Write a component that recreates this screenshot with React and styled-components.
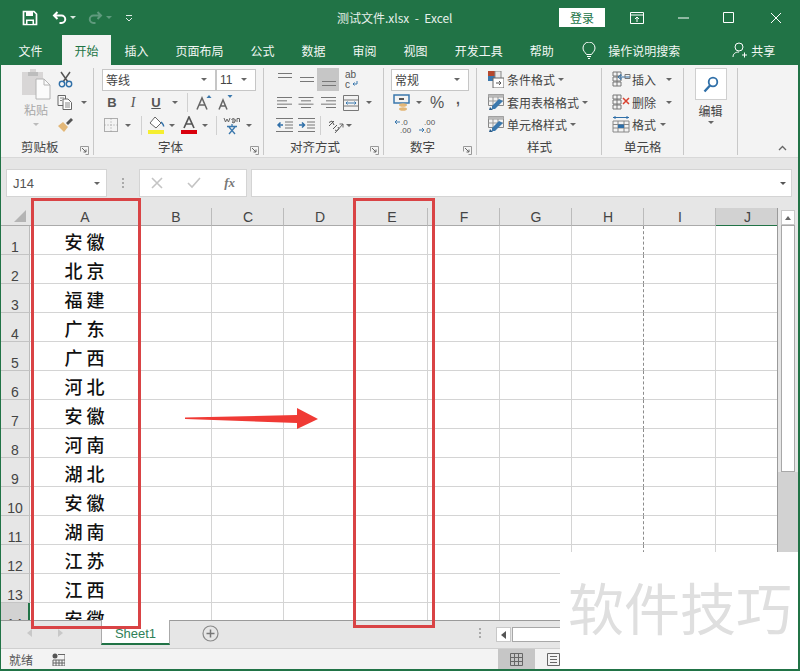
import React from "react"
import styled, { createGlobalStyle } from "styled-components"

const Global = createGlobalStyle`
html, body { margin: 0; padding: 0; background: #fff; overflow: hidden; }
* { box-sizing: border-box; }
`
const CJK = `"Noto Sans CJK SC", "Liberation Sans", sans-serif`

const Win = styled.div`
position: relative;
width: 800px;
height: 671px;
display: flex;
flex-direction: column;
overflow: hidden;
font-family: ${CJK};
font-size: 12px;
color: #444;
background: #e6e6e6;
border-left: 1px solid #217346;
border-right: 2px solid #217346;
border-bottom: 2px solid #217346;
`
const TitleBar = styled.div`
height: 35px;
flex: none;
background: #217346;
color: #fff;
display: flex;
align-items: center;
padding-left: 21px;
`
const QuickGroup = styled.div`
display: flex;
align-items: center;
width: 315px;
flex: none;
`
const Spacer = styled.span`
width: ${p => p.$w}px;
flex: none;
`
const Title = styled.div`
width: 122px;
flex: none;
white-space: pre;
font-size: 12px;
color: #e6f0ea;
`
const Login = styled.div`
margin-left: 100px;
width: 46px;
height: 19px;
background: #fff;
color: #217346;
font-size: 12px;
display: flex;
align-items: center;
justify-content: center;
`
const WinBtns = styled.div`
display: flex;
align-items: center;
margin-left: 25px;
gap: 33px;
`
const TabBar = styled.div`
height: 30px;
flex: none;
background: #217346;
color: #fff;
display: flex;
align-items: stretch;
padding-left: 4px;
`
const Tab = styled.div`
padding: 0 ${p => p.$pad ?? 13.5}px;
margin-left: ${p => p.$ml || 0}px;
display: flex;
align-items: center;
white-space: nowrap;
font-size: 12px;
background: ${p => (p.$active ? "#f3f3f3" : "transparent")};
color: ${p => (p.$active ? "#217346" : "#f2f7f4")};
`
const Ribbon = styled.div`
height: 93px;
flex: none;
background: #f3f3f3;
display: flex;
padding-top: 3px;
border-bottom: 1px solid #d8d8d8;
`
const Group = styled.div`
width: ${p => p.$w}px;
flex: none;
height: 87px;
display: flex;
flex-direction: column;
border-right: 1.5px solid #c8c8c8;
`
const GroupBody = styled.div`
height: 68px;
flex: none;
display: flex;
`
const Footer = styled.div`
flex: 1;
display: grid;
grid-template-columns: ${p => p.$l}px auto 1fr;
align-items: center;
padding: 1px 4px 0 0;
font-size: 12.5px;
color: #444;
`
const Launcher = styled.svg`
justify-self: end;
margin-top: 8px;
`
const Rows = styled.div`
display: flex;
flex-direction: column;
padding-left: ${p => p.$pl || 0}px;
`
const ToolRow = styled.div`
height: ${p => p.$h || 22}px;
display: flex;
align-items: center;
`
const Tool = styled.div`
width: ${p => p.$w || 22}px;
height: 100%;
flex: none;
display: flex;
align-items: ${p => p.$v || "center"};
justify-content: center;
padding: ${p => (p.$v ? "4px 0" : "0")};
background: ${p => (p.$on ? "#c6c6c6" : "transparent")};
`
const Letter = styled.span`
font-family: ${p => (p.$serif ? `"Liberation Serif", serif` : `"Liberation Sans", sans-serif`)};
font-size: ${p => p.$size || 13}px;
font-weight: ${p => (p.$bold ? 700 : 400)};
font-style: ${p => (p.$italic ? "italic" : "normal")};
text-decoration: ${p => (p.$under ? "underline" : "none")};
color: #555;
`
const Comma = styled(Letter)`
padding-bottom: 7px;
`
const Caret = styled.span`
flex: none;
width: 0;
height: 0;
margin: 0 ${p => p.$mx || 0}px;
border-left: 3px solid transparent;
border-right: 3px solid transparent;
border-top: 3px solid ${p => p.$color || "#666"};
`
const UpCaret = styled.span`
width: 0;
height: 0;
border-left: 3px solid transparent;
border-right: 3px solid transparent;
border-bottom: 4px solid #666;
`
const PasteCaret = styled(Caret)`
margin-top: 5px;
`
const PasteLabel = styled.span`
margin-top: 2px;
`
const Sep = styled.span`
width: 1px;
height: 19px;
flex: none;
margin: 0 ${p => p.$mx || 5}px;
background: #d0d0d0;
`
const Combo = styled.div`
width: ${p => p.$w}px;
height: 22px;
flex: none;
background: #fff;
border: 1px solid #c6c6c6;
display: flex;
align-items: center;
justify-content: space-between;
padding: 0 8px 0 3px;
color: #444;
font-family: ${p => (p.$num ? `"Liberation Sans", sans-serif` : CJK)};
font-size: 12px;
`
const PasteCol = styled.div`
width: 54px;
flex: none;
padding-left: 16px;
display: flex;
flex-direction: column;
align-items: center;
color: #a8a8a8;
line-height: 16px;
`
const ListRow = styled.div`
height: 23px;
display: flex;
align-items: center;
gap: ${p => p.$gap ?? 3}px;
white-space: nowrap;
color: #444;
font-size: 12px;
`
const EditBtn = styled.div`
width: 32px;
height: 32px;
background: #fff;
border: 1px solid #cfcfcf;
display: flex;
align-items: center;
justify-content: center;
`
const EditCol = styled.div`
width: 100%;
display: flex;
flex-direction: column;
align-items: center;
gap: 2px;
color: #444;
`
const Collapse = styled.div`
flex: 1;
display: flex;
align-items: flex-end;
justify-content: flex-end;
padding: 0 11px 6px 0;
`
const FormulaBar = styled.div`
height: 50px;
flex: none;
background: #e6e6e6;
padding: 11px 6px 11px 5px;
display: flex;
align-items: stretch;
`
const NameBox = styled.div`
width: 101px;
background: #fff;
border: 1px solid #d4d4d4;
display: flex;
align-items: center;
justify-content: space-between;
padding: 0 6px;
font-family: "Liberation Sans", sans-serif;
font-size: 13px;
color: #555;
`
const Dots = styled.div`
width: 32px;
flex: none;
display: flex;
flex-direction: column;
align-items: center;
justify-content: center;
gap: 2px;
span { width: 2px; height: 2px; background: #aaa; }
`
const StripDots = styled(Dots)`
height: 24px;
margin-left: 245px;
`
const FxBox = styled.div`
width: 108px;
background: #fff;
border: 1px solid #d4d4d4;
display: flex;
align-items: center;
justify-content: space-between;
padding: 0 11px 0 11px;
margin-right: 4px;
`
const FxText = styled.span`
font-family: "Liberation Serif", serif;
font-style: italic;
font-weight: 700;
font-size: 13px;
color: #777;
`
const FormulaInput = styled.div`
flex: 1;
background: #fff;
border: 1px solid #d4d4d4;
display: flex;
align-items: center;
justify-content: flex-end;
padding-right: 5px;
`
const SheetArea = styled.div`
height: 412px;
flex: none;
display: flex;
`
const Grid = styled.div`
width: 777px;
flex: none;
display: grid;
grid-template-columns: 29px 110px repeat(8, 72px) 62px;
grid-auto-rows: 29px;
grid-template-rows: 18px;
overflow: hidden;
background: #fff;
border-right: 1.5px solid #9a9a9a;
`
const Corner = styled.div`
background: #e6e6e6;
border-bottom: 1.5px solid #aaa;
display: flex;
align-items: flex-end;
justify-content: flex-end;
padding: 0 4px 3px 0;
`
const ColHead = styled.div`
background: ${p => (p.$sel ? "#d2d2d2" : "#e6e6e6")};
border-right: ${p => (p.$sel ? "none" : "1.5px solid #bbb")};
border-bottom: 1.5px solid ${p => (p.$sel ? "#217346" : "#aaa")};
display: flex;
align-items: center;
justify-content: center;
padding: 1px 0 0 1px;
font-family: "Liberation Sans", sans-serif;
font-size: 14px;
line-height: 14px;
color: #444;
`
const RowHead = styled.div`
background: ${p => (p.$sel ? "#d2d2d2" : "#e6e6e6")};
border-right: ${p => (p.$sel ? "2px solid #217346" : "1.5px solid #bbb")};
border-bottom: 1.5px solid #c4c4c4;
display: flex;
align-items: flex-end;
justify-content: center;
padding-bottom: 1px;
font-family: "Liberation Sans", sans-serif;
font-size: 14px;
line-height: 12px;
color: #444;
`
const Cell = styled.div`
border-right: ${p => (p.$pageBreak ? "1.5px dashed #8c8c8c" : "1.5px solid #d4d4d4")};
border-bottom: 1.5px solid #d4d4d4;
display: flex;
align-items: center;
justify-content: center;
padding-top: 2px;
font-size: 18px;
font-weight: 500;
color: #111;
white-space: pre;
`
const VScroll = styled.div`
flex: 1;
background: #e6e6e6;
padding: 2px 3px 0 3px;
display: flex;
flex-direction: column;
`
const UpBtn = styled.div`
height: 15px;
flex: none;
background: #fff;
border: 1px solid #c8c8c8;
display: flex;
align-items: center;
justify-content: center;
`
const Thumb = styled.div`
height: 247px;
flex: none;
background: #fff;
border: 1px solid #a8a8a8;
`
const Track = styled.div`
flex: 1;
margin: 0 -3px;
background: #d2d2d2;
`
const TabStrip = styled.div`
height: 28px;
flex: none;
background: #e6e6e6;
border-top: 1.5px solid #9a9a9a;
display: flex;
align-items: flex-start;
`
const Nav = styled.div`
width: 100px;
flex: none;
height: 24px;
display: flex;
align-items: center;
padding-left: 26px;
gap: 24px;
`
const SheetTab = styled.div`
width: 69px;
height: 25px;
flex: none;
background: #fff;
border-left: 1px solid #aaa;
border-right: 1px solid #aaa;
border-bottom: 2px solid #217346;
margin-top: -1px;
display: flex;
align-items: flex-end;
justify-content: center;
padding-bottom: 2px;
font-family: "Liberation Sans", sans-serif;
font-size: 13px;
color: #2f8058;
`
const AddSheet = styled.div`
margin: 4px 0 0 32px;
flex: none;
width: 17px;
`
const HScroll = styled.div`
margin: 6px 0 0 0;
display: flex;
align-items: center;
`
const HBtn = styled.div`
width: 15px;
height: 15px;
background: #fff;
border: 1px solid #c8c8c8;
display: flex;
align-items: center;
justify-content: center;
`
const HThumb = styled.div`
width: 60px;
height: 15px;
margin-left: 1px;
background: #fff;
border: 1px solid #a8a8a8;
`
const StatusBar = styled.div`
flex: 1;
background: #f3f3f3;
border-top: 1px solid #cfcfcf;
display: flex;
align-items: stretch;
padding-left: 8px;
font-size: 12px;
color: #555;
`
const StatusText = styled.div`
display: flex;
align-items: center;
width: 43px;
flex: none;
`
const StatusIcon = styled.div`
display: flex;
align-items: center;
width: 446px;
flex: none;
`
const ViewBtn = styled.div`
width: 37px;
flex: none;
display: flex;
align-items: center;
justify-content: center;
background: ${p => (p.$on ? "#c6c6c6" : "transparent")};
`
const Marker = styled.div`
position: absolute;
left: ${p => p.$l - 1}px;
top: 198px;
width: ${p => p.$w}px;
height: ${p => p.$h}px;
border: 3px solid #d94345;
pointer-events: none;
`
const Arrow = styled.svg`
position: absolute;
left: 183px;
top: 406px;
`
const Watermark = styled.div`
position: absolute;
left: 559px;
top: 552px;
width: 241px;
height: 119px;
background: #fff;
padding: 20px 0 0 8px;
font-size: 56px;
font-weight: 400;
line-height: 68px;
white-space: nowrap;
color: #dfdfdf;
`

const Svg = ({ w = 16, h = 16, children, ...rest }) => (
  <svg width={w} height={h} viewBox={`0 0 ${w} ${h}`} fill="none" {...rest}>{children}</svg>
)
const SaveIcon = () => (
  <Svg>
    <path d="M1.500 1.500h10.500l2.500 2.500v10.500h-13z" stroke="#fff" strokeWidth="1.700" />
    <path d="M4 1.500h7v4.500h-7zM4 9.500h8v5h-8z" fill="#fff" />
    <path d="M5.500 11h5v3h-5z" fill="#217346" />
  </Svg>
)
const UndoIcon = ({ color = "#fff" }) => (
  <Svg w={15} h={15}>
    <path d="M5.500 2L2 5.500 5.500 9M2.500 5.500h7a3.500 3.500 0 0 1 0 7.500H7.500" stroke={color} strokeWidth="2" />
  </Svg>
)
const RedoIcon = () => (
  <Svg w={15} h={15}>
    <path d="M9.500 2L13 5.500 9.500 9M12.500 5.500h-7a3.500 3.500 0 0 0 0 7.500h2" stroke="#5f9a7d" strokeWidth="2" />
  </Svg>
)
const PasteIcon = () => (
  <Svg w={30} h={32}>
    <path d="M1 4h8V1h6v3h7v23H1z" fill="#d8d6d6" />
    <path d="M7 4h10v4H7z" fill="#bdbdbd" />
    <path d="M15 11h8l6 6v14H15z" fill="#fbfbfb" stroke="#b4b4b4" />
    <path d="M23 11v6h6" stroke="#b4b4b4" />
  </Svg>
)
const ScissorsIcon = () => (
  <Svg w={15} h={17}>
    <path d="M3 1l7 10M12 1L5 11" stroke="#555" strokeWidth="1.500" />
    <circle cx="4" cy="13" r="2.700" stroke="#2f6fa8" strokeWidth="1.400" />
    <circle cx="11" cy="13" r="2.700" stroke="#2f6fa8" strokeWidth="1.400" />
  </Svg>
)
const CopyIcon = () => (
  <Svg w={16} h={16}>
    <path d="M1 1.500h7.500v10H1z" stroke="#666" fill="#f8f8f8" />
    <path d="M6 5h5l3.500 3.500v7H6z" stroke="#666" fill="#fff" />
    <path d="M8 9h5M8 11h5M8 13h5M3 4h4M3 6.500h2" stroke="#888" />
  </Svg>
)
const BrushIcon = () => (
  <Svg w={16} h={16}>
    <path d="M1 9l5-4 5 5-4 5z" fill="#e3b777" />
    <path d="M9 6l5-5 2 2-5 5z" fill="#555" />
  </Svg>
)
const BorderIcon = () => (
  <Svg w={14} h={14}>
    <path d="M.5.500h13v13H.5z" stroke="#666" strokeDasharray="1 1" />
    <path d="M7 .5v13M.5 7h13" stroke="#999" strokeDasharray="1 2" />
  </Svg>
)
const FillIcon = () => (
  <Svg w={17} h={19}>
    <path d="M7 1l6 6-5 5-6-5z" fill="#fff" stroke="#666" />
    <path d="M13 6c2 2 3 3 2.500 4.500" stroke="#2f6fa8" strokeWidth="1.500" />
    <path d="M0 14h16v4H0z" fill="#f5ee30" />
  </Svg>
)
const FontColorIcon = () => (
  <Svg w={16} h={19}>
    <path d="M3 12L8 1l5 11M5 8h6" stroke="#555" strokeWidth="1.700" />
    <path d="M0 14h16v4H0z" fill="#d9000d" />
  </Svg>
)
const GrowA = ({ up }) => (
  <Svg w={16} h={18}>
    <path d={up ? "M1 15.500L6 4l5 11.500M3 11h6" : "M2 15.500L6 6l4 9.500M3.500 12h5"} stroke="#666" strokeWidth="1.500" />
    <path d={up ? "M10.500 4l2.500-3 2.500 3z" : "M10.500 1l2.500 3 2.500-3z"} fill="#3b78ad" />
  </Svg>
)
const PinyinIcon = () => (
  <Svg w={18} h={20}>
    <path d="M1 3l1.500 4 1.500-3 1.500 3 1.500-4M9 5h3M8.500 5a2 2 0 1 1 .5 2h3M14 7V3.500h2.500V7" stroke="#666" />
    <path d="M9 9v2M4 11.500h10M6 12l6 7M12 12l-6 7" stroke="#3b78ad" strokeWidth="1.300" />
  </Svg>
)
const LinesIcon = ({ widths = [16, 16, 16], w = 18, h = 13, color = "#777", align = "left" }) => (
  <Svg w={w} h={h}>
    {widths.map((l, i) => {
      const x = align === "center" ? (w - l) / 2 : align === "right" ? w - l : 1
      const y = 1.500 + (i * (h - 3)) / Math.max(widths.length - 1, 1)
      return <path key={i} d={`M${x} ${y}h${l}`} stroke={color} />
    })}
  </Svg>
)
const WrapIcon = () => (
  <Svg w={15} h={20}>
    <text x="1" y="8" fontFamily="Liberation Sans" fontSize="10" fill="#555">ab</text>
    <text x="1" y="18" fontFamily="Liberation Sans" fontSize="10" fill="#555">c</text>
    <path d="M13 11v3h-4M10.500 12.500L9 14l1.500 1.500" stroke="#3b78ad" />
  </Svg>
)
const MergeIcon = () => (
  <Svg w={16} h={16}>
    <path d="M.5.500h15v15H.5zM.5 5h15M.5 11h15" stroke="#777" />
    <path d="M3 8h10M4.500 6.500L3 8l1.500 1.500M11.500 6.500L13 8l-1.500 1.500" stroke="#3b78ad" />
  </Svg>
)
const IndentIcon = ({ right }) => (
  <Svg w={17} h={14}>
    <path d="M0 .500h17M0 13.500h17M9 4h8M9 7h8M9 10h8" stroke="#777" />
    <path d={right ? "M1 7h5M4 4.500L6.500 7 4 9.500" : "M7 7H2M4.500 4.500L2 7l2.500 2.500"} stroke="#2f6fa8" strokeWidth="1.500" />
  </Svg>
)
const OrientIcon = () => (
  <Svg w={17} h={17}>
    <path d="M2 9l5-5M2 5.500l3-1.500 2 4M6 12l4-4M8 13a2 2 0 0 0 3-3" stroke="#555" />
    <path d="M8 16l8-9M12.500 7H16v3.500" stroke="#666" />
  </Svg>
)
const AccountingIcon = () => (
  <Svg w={18} h={18}>
    <path d="M1 1h15v8H1z" stroke="#3b78ad" strokeWidth="1.500" />
    <path d="M6 5h5" stroke="#555" strokeWidth="2" />
    <ellipse cx="10" cy="11" rx="4" ry="1.800" fill="#e3b777" />
    <ellipse cx="10" cy="15" rx="4" ry="1.800" fill="#e3b777" />
  </Svg>
)
const DecimalIcon = ({ more }) => (
  <Svg w={17} h={15}>
    <text x={more ? 5 : 6} y="6.500" fontFamily="Liberation Sans" fontSize="8" fill="#555">{more ? ".00" : ".0"}</text>
    <text x="5" y="14.500" fontFamily="Liberation Sans" fontSize="8" fill="#555">{more ? ".0" : ".00"}</text>
    <path d={more ? "M0 12h5M3 10l2 2-2 2" : "M5 4H0M2 2L0 4l2 2"} stroke="#3b78ad" />
  </Svg>
)
const CondIcon = () => (
  <Svg w={16} h={17}>
    <path d="M0 0h7v5H0z" fill="#b5482e" />
    <path d="M0 5h7v5H0z" fill="#3b78ad" />
    <path d="M7 0h6v10H7z" fill="#e8e8e8" stroke="#888" />
    <path d="M5 7h11v10H5z" fill="#fff" stroke="#666" />
    <path d="M8 12h5M11 10l2 2-2 2" stroke="#555" />
  </Svg>
)
const TableIcon = () => (
  <Svg w={16} h={17}>
    <path d="M.5.500h15v11H.5z" fill="#f2f2f2" stroke="#888" />
    <path d="M.5 3h15M5 .5v11M10 .5v11M.5 7h15" stroke="#999" />
    <path d="M.5.500h15v2.500H.5z" fill="#b9b9b9" />
    <path d="M15 7L7 15H4v-3l7-7z" fill="#3b78ad" />
    <path d="M2 13l3 3H1z" fill="#2b5c88" />
  </Svg>
)
const CellsIcon = ({ kind }) => (
  <Svg w={19} h={16}>
    <path d="M1 1h8v4H1zM1 6h8v4H1zM1 11h8v4H1zM5 1v14" stroke="#777" />
    {kind === "add" && <path d="M10 6h8M6 6l3-2.500v5z" stroke="#2f6fa8" />}
    {kind === "del" && <path d="M11 4l6 6M17 4l-6 6" stroke="#d9402e" strokeWidth="1.500" />}
    {kind === "add" && <path d="M13 3.500h5v4h-5z" stroke="#777" />}
  </Svg>
)
const FormatIcon = () => (
  <Svg w={19} h={17}>
    <path d="M1 5h16v11H1zM1 8.500h16M1 12h16M6 5v11M12 5v11" stroke="#888" />
    <path d="M6 8.500h6V12H6z" fill="#2f6fa8" />
    <path d="M1 1.500h16M3 0v3M15 0v3" stroke="#2f6fa8" />
  </Svg>
)
const SearchIcon = () => (
  <Svg w={16} h={17}>
    <circle cx="10" cy="6" r="4.300" stroke="#2f6fa8" strokeWidth="1.800" />
    <path d="M7 9.500l-5.500 6" stroke="#2f6fa8" strokeWidth="2.400" />
  </Svg>
)
const LaunchMark = () => (
  <Launcher width="9" height="9" viewBox="0 0 9 9" fill="none">
    <path d="M.5 5.500v-5h8v8h-3" stroke="#999" />
    <path d="M2 2l4 4M6 3.500V6H3.500" stroke="#666" />
  </Launcher>
)
const ColGlyph = ({ color }) => (
  <Svg w={13} h={13}>
    <path d="M.5.500h12v12H.5zM4.500.500v12M8.500.500v12M.5 4.500h12M.5 8.500h12" stroke={color} />
  </Svg>
)

const cols = ["A", "B", "C", "D", "E", "F", "G", "H", "I", "J"]
const places = ["安 徽", "北 京", "福 建", "广 东", "广 西", "河 北", "安 徽", "河 南", "湖 北", "安 徽", "湖 南", "江 苏", "江 西", "安 徽"]

function TitleRow() {
  return (
    <TitleBar>
      <QuickGroup>
        <SaveIcon />
        <Spacer $w={14} />
        <UndoIcon />
        <Caret $mx={3} $color="#d8e8df" />
        <Spacer $w={9} />
        <RedoIcon />
        <Caret $mx={3} $color="#5f9a7d" />
        <Spacer $w={10} />
        <Svg w={8} h={8}><path d="M1 1.500h6M1 4l3 3 3-3" stroke="#e0ece6" /></Svg>
      </QuickGroup>
      <Title>测试文件.xlsx  -  Excel</Title>
      <Login>登录</Login>
      <WinBtns>
        <Svg w={14} h={12}><path d="M.5.500h13v11H.5zM.5 3h13M7 10V5M5 7l2-2 2 2" stroke="#fff" /></Svg>
        <Svg w={13} h={11}><path d="M1 6h11" stroke="#fff" /></Svg>
        <Svg w={11} h={11}><path d="M.5.500h10v10H.5z" stroke="#fff" /></Svg>
        <Svg w={15} h={12}><path d="M4 1l10 10M14 1L4 11" stroke="#fff" /></Svg>
      </WinBtns>
    </TitleBar>
  )
}

function Tabs() {
  return (
    <TabBar>
      <Tab>文件</Tab>
      <Tab $active $pad={12.5} $ml={6}>开始</Tab>
      <Tab>插入</Tab>
      <Tab>页面布局</Tab>
      <Tab>公式</Tab>
      <Tab>数据</Tab>
      <Tab>审阅</Tab>
      <Tab>视图</Tab>
      <Tab>开发工具</Tab>
      <Tab>帮助</Tab>
      <Tab $pad={0} $ml={15}>
        <Svg w={14} h={17}>
          <path d="M4.500 12.500C3 10 1 9 1 6a6 6 0 0 1 12 0c0 3-2 4-3.500 6.500zM5 14.500h4M6 16.500h2" stroke="#fff" />
        </Svg>
      </Tab>
      <Tab $pad={0} $ml={12}>操作说明搜索</Tab>
      <Tab $pad={0} $ml={52}>
        <Svg w={15} h={16}>
          <circle cx="7" cy="5" r="4" stroke="#fff" />
          <path d="M1 15c0-3 2-5 6-5M10 13h5M12.500 10.500v5" stroke="#fff" />
        </Svg>
      </Tab>
      <Tab $pad={0} $ml={4}>共享</Tab>
    </TabBar>
  )
}

function ClipboardGroup() {
  return (
    <Group $w={93}>
      <GroupBody>
        <PasteCol>
          <PasteIcon />
          <PasteLabel>粘贴</PasteLabel>
          <PasteCaret $color="#bbb" />
        </PasteCol>
        <Rows>
          <ToolRow $h={23}><Tool $w={20}><ScissorsIcon /></Tool></ToolRow>
          <ToolRow $h={23}><Tool $w={20}><CopyIcon /></Tool><Caret $mx={6} /></ToolRow>
          <ToolRow $h={23}><Tool $w={20}><BrushIcon /></Tool></ToolRow>
        </Rows>
      </GroupBody>
      <Footer $l={20}><span /><span>剪贴板</span><LaunchMark /></Footer>
    </Group>
  )
}

function FontGroup() {
  return (
    <Group $w={170}>
      <GroupBody>
        <Rows $pl={8}>
          <ToolRow $h={23}>
            <Combo $w={114}>等线<Caret /></Combo>
            <Combo $w={40} $num>11<Caret /></Combo>
          </ToolRow>
          <ToolRow $h={23}>
            <Tool $w={20}><Letter $bold $size={13}>B</Letter></Tool>
            <Tool $w={22}><Letter $italic $serif $size={14}>I</Letter></Tool>
            <Tool $w={24}><Letter $under $bold $size={13}>U</Letter></Tool>
            <Caret $mx={4} />
            <Sep />
            <Tool $w={22}><GrowA up /></Tool>
            <Tool $w={20}><GrowA /></Tool>
          </ToolRow>
          <ToolRow $h={22}>
            <Tool $w={18}><BorderIcon /></Tool>
            <Caret $mx={5} />
            <Sep $mx={5} />
            <Tool $w={19}><FillIcon /></Tool>
            <Caret $mx={3} />
            <Tool $w={22}><FontColorIcon /></Tool>
            <Caret $mx={2} />
            <Sep $mx={6} />
            <Tool $w={18}><PinyinIcon /></Tool>
            <Caret $mx={5} />
          </ToolRow>
        </Rows>
      </GroupBody>
      <Footer $l={64}><span /><span>字体</span><LaunchMark /></Footer>
    </Group>
  )
}

function AlignGroup() {
  return (
    <Group $w={120}>
      <GroupBody>
        <Rows $pl={9}>
          <ToolRow $h={23}>
            <Tool $v="flex-start"><LinesIcon widths={[14, 14]} w={15} h={7} /></Tool>
            <Tool><LinesIcon widths={[14, 14]} w={15} h={7} /></Tool>
            <Tool $on $v="flex-end"><LinesIcon widths={[14, 14]} w={15} h={7} /></Tool>
            <Tool $w={24}><WrapIcon /></Tool>
          </ToolRow>
          <ToolRow $h={23}>
            <Tool><LinesIcon widths={[15, 10, 15, 10]} w={16} /></Tool>
            <Tool><LinesIcon widths={[15, 10, 15, 10]} align="center" w={16} /></Tool>
            <Tool><LinesIcon widths={[15, 10, 15, 10]} align="right" w={16} /></Tool>
            <Tool $w={24}><MergeIcon /></Tool>
            <Caret $mx={3} />
          </ToolRow>
          <ToolRow $h={22}>
            <Tool><IndentIcon /></Tool>
            <Tool><IndentIcon right /></Tool>
            <Sep $mx={3} />
            <Tool><OrientIcon /></Tool>
            <Caret />
          </ToolRow>
        </Rows>
      </GroupBody>
      <Footer $l={26}><span /><span>对齐方式</span><LaunchMark /></Footer>
    </Group>
  )
}

function NumberGroup() {
  return (
    <Group $w={93}>
      <GroupBody>
        <Rows $pl={7}>
          <ToolRow $h={23}><Combo $w={78}>常规<Caret /></Combo></ToolRow>
          <ToolRow $h={23}>
            <Tool $w={22}><AccountingIcon /></Tool>
            <Caret $mx={3} />
            <Tool $w={24}><Letter $size={16}>%</Letter></Tool>
            <Tool $w={18}><Comma $bold $size={14}>,</Comma></Tool>
          </ToolRow>
          <ToolRow $h={22}>
            <Tool $w={24}><DecimalIcon /></Tool>
            <Tool $w={24}><DecimalIcon more /></Tool>
          </ToolRow>
        </Rows>
      </GroupBody>
      <Footer $l={26}><span /><span>数字</span><LaunchMark /></Footer>
    </Group>
  )
}

function StylesGroup() {
  return (
    <Group $w={125}>
      <GroupBody>
        <Rows $pl={11}>
          <ListRow><CondIcon />条件格式<Caret /></ListRow>
          <ListRow><TableIcon />套用表格格式<Caret /></ListRow>
          <ListRow><TableIcon />单元格样式<Caret /></ListRow>
        </Rows>
      </GroupBody>
      <Footer $l={50}><span /><span>样式</span><span /></Footer>
    </Group>
  )
}

function CellsGroup() {
  return (
    <Group $w={82}>
      <GroupBody>
        <Rows $pl={10}>
          <ListRow $gap={1}><CellsIcon kind="add" />插入<Caret $mx={9} /></ListRow>
          <ListRow $gap={1}><CellsIcon kind="del" />删除<Caret $mx={9} /></ListRow>
          <ListRow $gap={1}><FormatIcon />格式<Caret $mx={3} /></ListRow>
        </Rows>
      </GroupBody>
      <Footer $l={22}><span /><span>单元格</span><span /></Footer>
    </Group>
  )
}

function EditGroup() {
  return (
    <Group $w={54}>
      <GroupBody>
        <EditCol>
          <EditBtn><SearchIcon /></EditBtn>
          <span>编辑</span>
          <Caret />
        </EditCol>
      </GroupBody>
    </Group>
  )
}

function RibbonPanel() {
  return (
    <Ribbon>
      <ClipboardGroup />
      <FontGroup />
      <AlignGroup />
      <NumberGroup />
      <StylesGroup />
      <CellsGroup />
      <EditGroup />
      <Collapse>
        <Svg w={9} h={6}><path d="M1 5l3.500-3.500L8 5" stroke="#666" strokeWidth="1.300" /></Svg>
      </Collapse>
    </Ribbon>
  )
}

function Formula() {
  return (
    <FormulaBar>
      <NameBox>J14<Caret /></NameBox>
      <Dots><span /><span /><span /></Dots>
      <FxBox>
        <Svg w={12} h={12}><path d="M1 1l10 10M11 1L1 11" stroke="#c4c4c4" strokeWidth="1.600" /></Svg>
        <Svg w={14} h={12}><path d="M1 6l4 4 8-9" stroke="#c4c4c4" strokeWidth="1.600" /></Svg>
        <FxText>fx</FxText>
      </FxBox>
      <FormulaInput><Caret $color="#555" /></FormulaInput>
    </FormulaBar>
  )
}

function Sheet() {
  return (
    <SheetArea>
      <Grid>
        <Corner>
          <Svg w={12} h={12}><path d="M12 0v12H0z" fill="#b4b4b4" /></Svg>
        </Corner>
        {cols.map(c => <ColHead key={c} $sel={c === "J"}>{c}</ColHead>)}
        {places.map((name, i) => (
          <React.Fragment key={i}>
            <RowHead $sel={i === 13}>{i + 1}</RowHead>
            <Cell>{name}</Cell>
            {cols.slice(1).map(c => <Cell key={c} $pageBreak={c === "H"} />)}
          </React.Fragment>
        ))}
      </Grid>
      <VScroll>
        <UpBtn><UpCaret /></UpBtn>
        <Thumb />
        <Track />
      </VScroll>
    </SheetArea>
  )
}

function SheetTabs() {
  return (
    <TabStrip>
      <Nav>
        <Svg w={6} h={8}><path d="M5 0v8L0 4z" fill="#c8c8c8" /></Svg>
        <Svg w={6} h={8}><path d="M1 0v8l5-4z" fill="#c8c8c8" /></Svg>
      </Nav>
      <SheetTab>Sheet1</SheetTab>
      <AddSheet>
        <Svg w={17} h={17}>
          <circle cx="8.500" cy="8.500" r="7.500" stroke="#8a8a8a" strokeWidth="1.200" />
          <path d="M4.500 8.500h8M8.500 4.500v8" stroke="#777" strokeWidth="1.500" />
        </Svg>
      </AddSheet>
      <StripDots><span /><span /><span /></StripDots>
      <HScroll>
        <HBtn><Svg w={5} h={8}><path d="M5 0v8L0 4z" fill="#555" /></Svg></HBtn>
        <HThumb />
      </HScroll>
    </TabStrip>
  )
}

function Status() {
  return (
    <StatusBar>
      <StatusText>就绪</StatusText>
      <StatusIcon>
        <Svg w={13} h={13}>
          <circle cx="3" cy="3" r="2.500" fill="#555" />
          <path d="M6 1.500h7v11.500H1V7h12M4 7v6M7 7v6M10 7v6M1 10h12" stroke="#666" />
        </Svg>
      </StatusIcon>
      <ViewBtn $on><ColGlyph color="#666" /></ViewBtn>
      <ViewBtn><Svg w={13} h={13}><path d="M.5.500h12v12H.5zM3 3.500h7M3 6.500h7M3 9.500h7" stroke="#666" /></Svg></ViewBtn>
    </StatusBar>
  )
}

export default function App() {
  return (
    <Win>
      <Global />
      <TitleRow />
      <Tabs />
      <RibbonPanel />
      <Formula />
      <Sheet />
      <SheetTabs />
      <Status />
      <Marker $l={31} $w={110} $h={431} />
      <Marker $l={353} $w={82} $h={430} />
      <Arrow width="136" height="26" viewBox="0 0 136 26">
        <path d="M1 11.500L113 9V2L134 13L113 23V17L1 13z" fill="#f03a35" />
      </Arrow>
      <Watermark>软件技巧</Watermark>
    </Win>
  )
}
